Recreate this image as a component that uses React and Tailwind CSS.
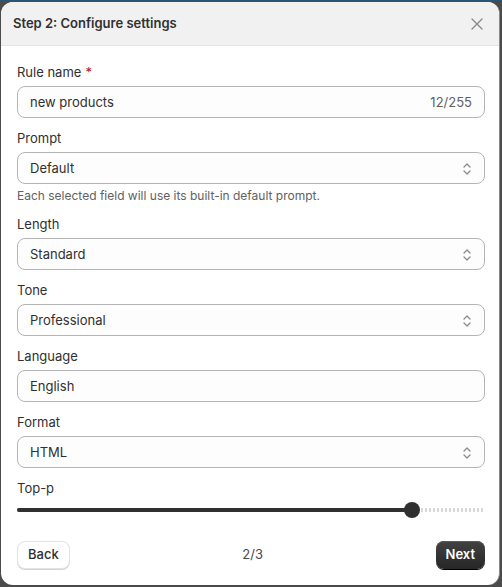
import React from 'react';

const font = { fontFamily: 'Inter, "Liberation Sans", sans-serif' };

const Chevrons = () => (
  <svg width="10" height="14" viewBox="0 0 10 14" fill="none" stroke="#8a8a8a" strokeWidth="1.3" strokeLinecap="round" strokeLinejoin="round">
    <path d="M2 5 L5 2 L8 5" />
    <path d="M2 9 L5 12 L8 9" />
  </svg>
);

const Label = ({ children, required }) => (
  <div className="text-[13px] leading-5 text-[#303030] mb-1">
    {children}
    {required && <span className="text-[#b0103a] ml-1">*</span>}
  </div>
);

const SelectField = ({ label, value, help }) => (
  <div>
    <Label>{label}</Label>
    <div className="h-8 flex items-center justify-between rounded-lg border border-[#b5b5b5] bg-[#fdfdfd] pl-3 pr-3 pt-px">
      <span className="text-[13px] text-[#303030]">{value}</span>
      <Chevrons />
    </div>
    {help && <div className="text-[12px] leading-4 text-[#616161] mt-1">{help}</div>}
  </div>
);

const TextField = ({ label, value, required, counter }) => (
  <div>
    <Label required={required}>{label}</Label>
    <div className="h-8 flex items-center justify-between rounded-lg border border-[#b5b5b5] bg-[#fdfdfd] px-3 pt-px">
      <span className="text-[13px] text-[#303030]">{value}</span>
      {counter && <span className="text-[13px] text-[#616161]">{counter}</span>}
    </div>
  </div>
);

const Slider = ({ percent }) => (
  <div>
    <Label>Top-p</Label>
    <div className="relative h-4 flex items-center">
      <div className="absolute left-0 right-0 h-[4px] bg-[repeating-linear-gradient(90deg,#d9d9d9_0_2px,transparent_2px_4px)]" />
      <div className="absolute left-0 h-[4px] rounded-full bg-[#303030]" style={{ width: `${percent}%` }} />
      <div
        className="absolute w-4 h-4 rounded-full bg-[#303030] -translate-x-1/2"
        style={{ left: `${percent}%` }}
      />
    </div>
  </div>
);

const App = () => {
  return (
    <div className="w-[502px] h-[587px] bg-[#4b4b4b] border-t-2 border-[#2b5573]" style={font}>
      <div className="ml-px w-[499px] h-[583px] bg-white rounded-xl border-r border-[#8a8a8a] overflow-hidden flex flex-col">
        <div className="h-[44px] bg-[#f1f1f1] border-b border-[#e3e3e3] flex items-center justify-between px-3">
          <span className="text-[13px] font-semibold text-[#303030]">Step 2: Configure settings</span>
          <svg width="12" height="12" viewBox="0 0 12 12" stroke="#8a8a8a" strokeWidth="1.4" strokeLinecap="round" className="mr-1">
            <path d="M1 1 L11 11 M11 1 L1 11" />
          </svg>
        </div>
        <div className="flex flex-col pl-4 pr-[14px] pt-4">
          <div className="flex flex-col gap-[10px]">
            <TextField label="Rule name" required value="new products" counter="12/255" />
            <SelectField label="Prompt" value="Default" help="Each selected field will use its built-in default prompt." />
            <SelectField label="Length" value="Standard" />
            <SelectField label="Tone" value="Professional" />
            <TextField label="Language" value="English" />
            <SelectField label="Format" value="HTML" />
            <Slider percent={84.4} />
          </div>
          <div className="mt-[23px] flex items-center justify-between">
            <button className="h-7 px-[10px] rounded-lg border border-[#e3e3e3] bg-white text-[13px] font-medium text-[#303030] shadow-[0_1px_0_#d4d4d4]">
              Back
            </button>
            <span className="text-[13px] text-[#4a4a4a]">2/3</span>
            <button className="h-7 px-[10px] rounded-lg bg-gradient-to-b from-[#424242] to-[#262626] text-[13px] font-semibold text-white shadow-[0_1px_0_#000,inset_0_1px_0_#5a5a5a]">
              Next
            </button>
          </div>
        </div>
      </div>
    </div>
  );
};

export default App;
